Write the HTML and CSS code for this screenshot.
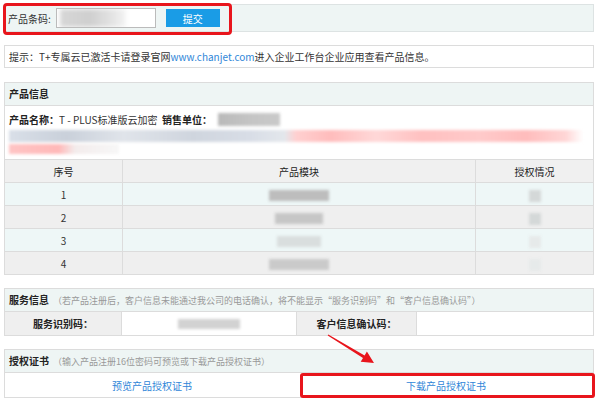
FILE: index.html
```html
<!DOCTYPE html>
<html lang="zh-CN">
<head>
  <meta charset="UTF-8" />
  <title>产品信息查询</title>
  <link rel="stylesheet" href="styles.css">
</head>
<body>
  <div class="page">

    <div class="barcode-bar">
      <div class="barcode-group">
        <span class="label">产品条码:</span>
        <span class="code-input"><span class="code-blur"></span></span>
        <button class="btn-submit">提交</button>
      </div>
    </div>

    <div class="notice">
      提示：T+专属云已激活卡请登录官网<a class="link">www.chanjet.com</a>进入企业工作台企业应用查看产品信息。
    </div>

    <div class="panel">
      <div class="panel-head"><b>产品信息</b></div>
      <div class="product-line">
        <b>产品名称：</b>T - PLUS标准版云加密&nbsp; <b>销售单位：</b><span class="blur-block seller"></span>
      </div>
      <div class="redact redact-a"></div>
      <div class="redact redact-b"></div>

      <table class="module-table">
        <thead>
          <tr><th class="col-no">序号</th><th>产品模块</th><th class="col-state">授权情况</th></tr>
        </thead>
        <tbody>
          <tr><td>1</td><td><span class="blur-block mod mod-1"></span></td><td><span class="blur-block state"></span></td></tr>
          <tr><td>2</td><td><span class="blur-block mod mod-2"></span></td><td><span class="blur-block state"></span></td></tr>
          <tr><td>3</td><td><span class="blur-block mod mod-3"></span></td><td><span class="blur-block state faint"></span></td></tr>
          <tr><td>4</td><td><span class="blur-block mod mod-4"></span></td><td><span class="blur-block state faint"></span></td></tr>
        </tbody>
      </table>
    </div>

    <div class="section">
      <div class="section-head"><b>服务信息</b><span class="note">（若产品注册后，客户信息未能通过我公司的电话确认，将不能显示“服务识别码”和“客户信息确认码”）</span></div>
      <div class="service-row">
        <div class="cell-label">服务识别码：</div>
        <div class="cell-value"><span class="blur-block service-code"></span></div>
        <div class="cell-label">客户信息确认码：</div>
        <div class="cell-value"></div>
      </div>
    </div>

    <div class="section">
      <div class="section-head"><b>授权证书</b><span class="note">（输入产品注册16位密码可预览或下载产品授权证书）</span></div>
      <div class="cert-row">
        <a class="link cert-link">预览产品授权证书</a>
        <a class="link cert-link marked">下载产品授权证书</a>
      </div>
    </div>

    <svg class="arrow" width="600" height="399" viewBox="0 0 600 399">
      <polygon fill="#e8151c" points="328.3,334.6 364.6,355.4 366.9,351.6 374,363 360.7,361.8 363,358 327.7,335.4" />
    </svg>
  </div>
</body>
</html>
```

FILE: styles.css
```css
body {
  margin: 0;
  background: #fff;
  font-family: 'Noto Sans CJK SC', 'Noto Sans', sans-serif;
  font-size: 10px;
  color: #333;
}

.page {
  position: relative;
  width: 590px;
  padding: 4px 0 0 4px;
}

b {
  font-weight: bold;
  color: #222;
}

.link {
  color: #2f86d8;
  text-decoration: none;
}

/* top barcode bar */
.barcode-bar {
  height: 26px;
  background: #eef5f4;
  border: 1px solid #dde3e3;
  display: flex;
  align-items: center;
}

.barcode-group {
  position: relative;
  display: flex;
  align-items: center;
  height: 100%;
  padding-left: 3px;
  width: 224px;
}

.barcode-group::after {
  content: "";
  position: absolute;
  left: -2px;
  top: -2px;
  right: 0;
  bottom: -4px;
  border: 3px solid #e8151c;
  border-radius: 4px;
}

.label {
  color: #333;
}

.code-input {
  margin-left: 5px;
  width: 98px;
  height: 18px;
  border: 1px solid #bbb;
  background: #fff;
  display: flex;
  align-items: center;
  overflow: hidden;
}

.code-blur {
  margin-left: 3px;
  width: 66px;
  height: 18px;
  background: linear-gradient(90deg, #d7d7d7 0%, #cfcfcf 45%, #e4e4e4 80%, #f4f4f4 100%);
  filter: blur(2px);
}

.btn-submit {
  margin-left: 10px;
  width: 54px;
  height: 18px;
  border: none;
  background: #1a9ce6;
  color: #fff;
  font-family: inherit;
  font-size: 10px;
  padding: 0;
}

/* notice */
.notice {
  margin-top: 13px;
  height: 21px;
  line-height: 21px;
  padding: 0 4px;
  border: 1px solid #dcdcdc;
  white-space: nowrap;
}

/* product panel */
.panel {
  margin-top: 14px;
  border: 1px solid #dcdcdc;
  border-bottom: none;
}

.panel-head,
.section-head {
  height: 22px;
  line-height: 22px;
  padding: 0 4px;
  background: #eef5f4;
  border-bottom: 1px solid #dcdcdc;
}

.product-line {
  margin-top: 6px;
  padding: 0 4px;
  height: 15px;
  line-height: 15px;
  display: flex;
  align-items: center;
  white-space: pre;
}

.blur-block {
  display: inline-block;
  filter: blur(1.5px);
}

.seller {
  margin-left: 6px;
  width: 62px;
  height: 13px;
  background: linear-gradient(90deg, #b9b9b9 0%, #c4c4c4 50%, #c9c9c9 100%);
}

.redact {
  margin-left: 4px;
  filter: blur(1.5px);
}

.redact-a {
  margin-top: 3px;
  height: 12px;
  width: 574px;
  background: linear-gradient(90deg,
    #d9dfe8 0%, #c9d0da 10%, #e0e4ea 20%, #cfd5de 32%, #d8dde6 42%,
    #e3e7ec 48%, #ffd0d0 50%, #ffbcbc 56%, #ffd8d8 64%, #ffc0c0 72%,
    #ffcaca 82%, #ffbcbc 90%, #ffd6d6 97%, #fff 100%);
}

.redact-b {
  margin-top: 2px;
  height: 10px;
  width: 110px;
  background: linear-gradient(90deg, #ffc4c4 0%, #ffb8b8 45%, #f3ecec 60%, #f7f7f7 100%);
}

.module-table {
  margin-top: 5px;
  width: 590px;
  margin-left: -1px;
  border-collapse: collapse;
  table-layout: fixed;
}

.module-table th,
.module-table td {
  height: 22px;
  padding: 0;
  border: 1px solid #dcdcdc;
  text-align: center;
  font-weight: normal;
}

.module-table th {
  background: #f0f0f0;
  color: #222;
}

.col-no,
.col-state {
  width: 117px;
}

.module-table tbody tr:nth-child(odd) td {
  background: #eef7f7;
}

.module-table tbody tr:nth-child(even) td {
  background: #efefef;
}

.mod {
  height: 11px;
  vertical-align: middle;
}

.mod-1 { width: 60px; background: #bdbdbd; }
.mod-2 { width: 48px; background: #c6c6c6; }
.mod-3 { width: 44px; background: #d9dede; }
.mod-4 { width: 60px; background: #cacaca; }

.state {
  width: 12px;
  height: 12px;
  background: #d4d8d8;
  vertical-align: middle;
}

.state.faint {
  background: #e6eaea;
}

/* service & certificate sections */
.section {
  margin-top: 13px;
  border: 1px solid #dcdcdc;
}

.note {
  color: #999;
  font-size: 9px;
  margin-left: 4px;
}

.service-row {
  display: grid;
  grid-template-columns: 117px 175px 120px 1fr;
  height: 23px;
}

.cell-label {
  background: #efefef;
  font-weight: bold;
  color: #222;
  display: flex;
  align-items: center;
  justify-content: center;
  border-right: 1px solid #dcdcdc;
}

.cell-value {
  display: flex;
  align-items: center;
  justify-content: center;
  border-right: 1px solid #dcdcdc;
}

.cell-value:last-child {
  border-right: none;
}

.service-code {
  width: 62px;
  height: 10px;
  background: #d2d2d2;
}

.cert-row {
  display: grid;
  grid-template-columns: 1fr 1fr;
  height: 24px;
}

.cert-link {
  position: relative;
  display: flex;
  align-items: center;
  justify-content: center;
}

.cert-link.marked::after {
  content: "";
  position: absolute;
  left: 1px;
  top: 0;
  right: -2px;
  bottom: -1px;
  border: 3px solid #e8151c;
  border-radius: 3px;
}

.arrow {
  position: absolute;
  left: 0;
  top: 0;
  pointer-events: none;
}
```
